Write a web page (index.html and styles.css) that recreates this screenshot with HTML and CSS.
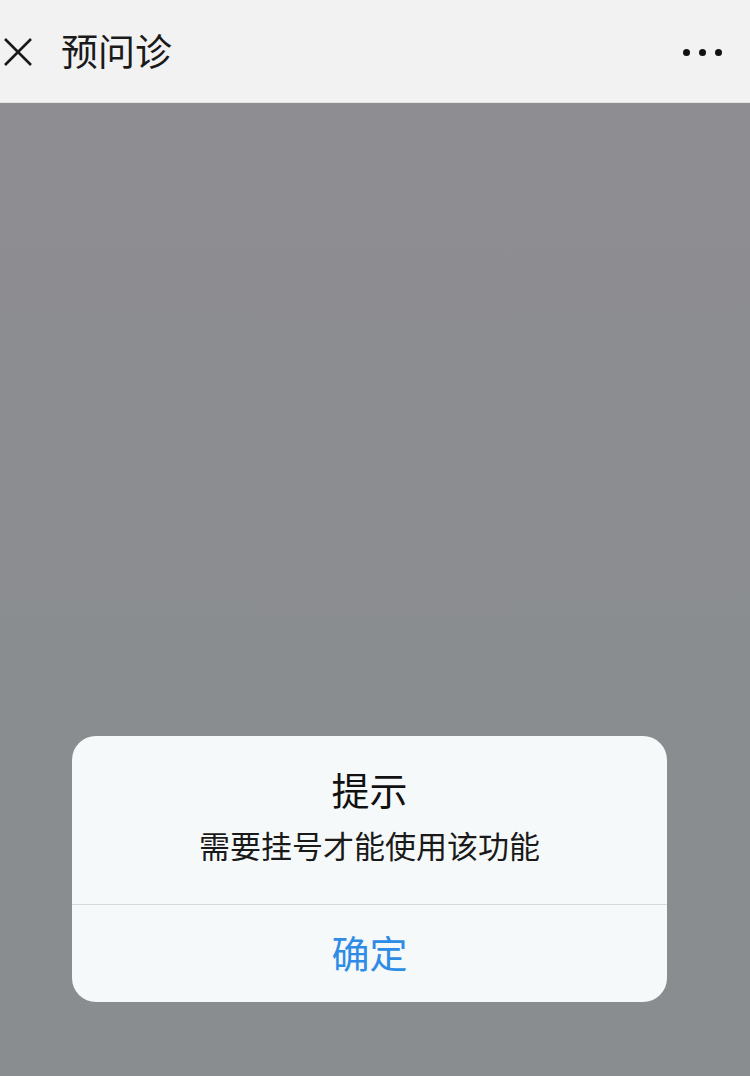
FILE: index.html
```html
<!DOCTYPE html>
<html lang="zh">
<head>
<meta charset="utf-8">
<link rel="stylesheet" href="styles.css">
</head>
<body>
<div class="page">
  <header class="nav">
    <svg class="close" viewBox="0 0 32 32" width="32" height="32"><path d="M3 3 L29 29 M29 3 L3 29" stroke="#1a1a1a" stroke-width="2.6" fill="none"/></svg>
    <div class="title">预问诊</div>
    <div class="more"><span></span><span></span><span></span></div>
  </header>
  <main class="mask">
    <div class="dialog">
      <div class="body">
        <div class="d-title">提示</div>
        <div class="d-msg">需要挂号才能使用该功能</div>
      </div>
      <div class="d-btn">确定</div>
    </div>
  </main>
</div>
</body>
</html>
```

FILE: styles.css
```css
html, body { margin: 0; padding: 0; }
body {
  width: 750px; height: 1076px; overflow: hidden;
  font-family: "Noto Sans CJK SC", "Noto Sans", sans-serif;
}
.page { display: flex; flex-direction: column; height: 1076px; }
.nav {
  height: 103px; flex: none;
  background: #f2f2f2;
  border-bottom: 1px solid #e2e2e2;
  display: flex; align-items: center;
  padding: 0 28px 0 2px;
  box-sizing: border-box;
}
.close { display: block; margin-top: 2px; }
.title {
  margin-left: 27px;
  font-size: 37px; color: #1a1a1a; line-height: 1;
  font-weight: 400;
  margin-top: -2px;
}
.more { margin-left: auto; display: flex; gap: 9px; margin-top: 2px; }
.more span { width: 7px; height: 7px; border-radius: 50%; background: #111; display: block; }
.mask {
  flex: 1;
  background: linear-gradient(#8e8d92, #8a8d90 60%, #898d90);
  display: flex; flex-direction: column; align-items: flex-start;
  padding-top: 633px; padding-left: 72px;
  box-sizing: border-box;
}
.dialog {
  width: 595px; height: 266px;
  background: #f6f9f9;
  border-radius: 24px;
  display: flex; flex-direction: column;
  overflow: hidden;
}
.body {
  height: 169px; box-sizing: border-box;
  border-bottom: 1px solid #d6d8d9;
  display: flex; flex-direction: column; align-items: center;
  padding-top: 30px;
}
.d-title { font-size: 38px; color: #111; line-height: 46px; font-weight: 400; }
.d-msg { font-size: 31px; color: #1a1a1a; line-height: 40px; margin-top: 13px; font-weight: 400; }
.d-btn {
  flex: 1; display: flex; align-items: center; justify-content: center;
  font-size: 38px; color: #2e8ce6; padding-bottom: 5px; font-weight: 400;
}
```
